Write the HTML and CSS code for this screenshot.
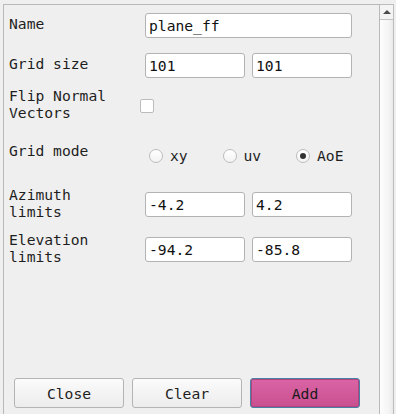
FILE: index.html
```html
<!DOCTYPE html>
<html>
<head>
<meta charset="utf-8">
<link rel="stylesheet" href="styles.css">
</head>
<body>
<div class="window">
  <div class="panel">
    <div class="row row-name">
      <div class="label">Name</div>
      <div class="fields"><div class="field wide">plane_ff</div></div>
    </div>
    <div class="row row-grid">
      <div class="label">Grid size</div>
      <div class="fields"><div class="field">101</div><div class="field">101</div></div>
    </div>
    <div class="row row-flip">
      <div class="label">Flip Normal<br>Vectors</div>
      <div class="fields-flat"><span class="checkbox"></span></div>
    </div>
    <div class="row row-mode">
      <div class="label">Grid mode</div>
      <div class="radios">
        <label class="radio"><span class="dot"></span><span>xy</span></label>
        <label class="radio"><span class="dot"></span><span>uv</span></label>
        <label class="radio"><span class="dot on"></span><span>AoE</span></label>
      </div>
    </div>
    <div class="row row-az">
      <div class="label">Azimuth<br>limits</div>
      <div class="fields"><div class="field">-4.2</div><div class="field">4.2</div></div>
    </div>
    <div class="row row-el">
      <div class="label">Elevation<br>limits</div>
      <div class="fields"><div class="field">-94.2</div><div class="field">-85.8</div></div>
    </div>
    <div class="buttons">
      <button class="btn">Close</button>
      <button class="btn">Clear</button>
      <button class="btn primary">Add</button>
    </div>
  </div>
  <div class="scrollbar">
    <div class="scroll-up"><span class="arrow"></span></div>
    <div class="track"></div>
  </div>
</div>
</body>
</html>
```
FILE: styles.css
```css
html, body {
  margin: 0;
  padding: 0;
  height: 414px;
  overflow: hidden;
  background: #efefef;
}
body {
  font-family: "DejaVu Sans Mono", "Liberation Mono", monospace;
  font-size: 14.67px;
  color: #1e1e1e;
}
.window {
  display: flex;
  padding: 4px 0 0 3px;
  height: 414px;
  box-sizing: border-box;
}
.panel {
  width: 377px;
  box-sizing: border-box;
  border: 1px solid #b9b9b9;
  border-bottom: none;
  padding: 8px 0 0 5px;
  display: flex;
  flex-direction: column;
  background: #efefef;
}
.row {
  display: flex;
  align-items: center;
}
.label {
  width: 131px;
  flex: none;
  line-height: 17px;
  padding-bottom: 4px;
  white-space: nowrap;
}
.fields {
  display: flex;
  gap: 7px;
  padding-left: 5px;
}
.fields-flat {
  display: flex;
}
.field {
  width: 100px;
  height: 25px;
  box-sizing: border-box;
  border: 1px solid #b3b3b3;
  border-radius: 3px;
  background: #fff;
  padding: 0 3px;
  color: #111;
  line-height: 24px;
  white-space: nowrap;
  overflow: hidden;
}
.field.wide {
  width: 207px;
}
.row-grid { margin-top: 15px; }
.row-flip { margin-top: 8.5px; }
.row-mode { margin-top: 17px; align-items: flex-start; }
.row-az { margin-top: 22px; }
.row-el { margin-top: 7px; }
.checkbox {
  width: 14px;
  height: 14px;
  box-sizing: border-box;
  border: 1px solid #bcbcbc;
  border-radius: 2px;
  background: #fff;
  display: block;
}
.radios {
  display: flex;
  margin-top: 5px;
  padding-left: 9px;
}
.radio {
  width: 73.5px;
  display: flex;
  align-items: center;
  gap: 7px;
  line-height: 17px;
}
.dot {
  width: 14px;
  height: 14px;
  box-sizing: border-box;
  border: 1px solid #bdbdbd;
  border-radius: 50%;
  background: linear-gradient(#ffffff, #f3f3f3);
  display: flex;
  align-items: center;
  justify-content: center;
  flex: none;
  margin-top: 2px;
}
.dot.on::after {
  content: "";
  width: 6px;
  height: 6px;
  border-radius: 50%;
  background: #333;
}
.buttons {
  display: flex;
  gap: 8px;
  margin-top: 109.5px;
  padding-left: 5px;
}
.btn {
  width: 110px;
  height: 30px;
  box-sizing: border-box;
  border: 1px solid #b4b4b4;
  border-radius: 3px;
  background: linear-gradient(#fbfbfb, #ececec);
  font-family: "DejaVu Sans Mono", "Liberation Mono", monospace;
  font-size: 14.67px;
  color: #1e1e1e;
  padding: 0;
  margin: 0;
}
.btn.primary {
  border: 1px solid #4a7fa6;
  box-shadow: inset 0 0 0 1px #b1457f;
  background: linear-gradient(#da64a6, #c9508f);
  color: #1a1a1a;
}
.scrollbar {
  width: 14px;
  box-sizing: border-box;
  border: 1px solid #bdbdbd;
  border-left: none;
  border-bottom: none;
  display: flex;
  flex-direction: column;
}
.scroll-up {
  height: 14px;
  border-bottom: 1px solid #c4c4c4;
  background: #f4f4f4;
  display: flex;
  align-items: center;
  justify-content: center;
}
.arrow {
  width: 0;
  height: 0;
  border-left: 4px solid transparent;
  border-right: 4px solid transparent;
  border-bottom: 4px solid #4a4a4a;
  margin-top: -1px;
}
.track {
  flex: 1;
  background: linear-gradient(90deg, #fdfdfd, #f4f4f4 70%, #e9e9e9);
}
```
